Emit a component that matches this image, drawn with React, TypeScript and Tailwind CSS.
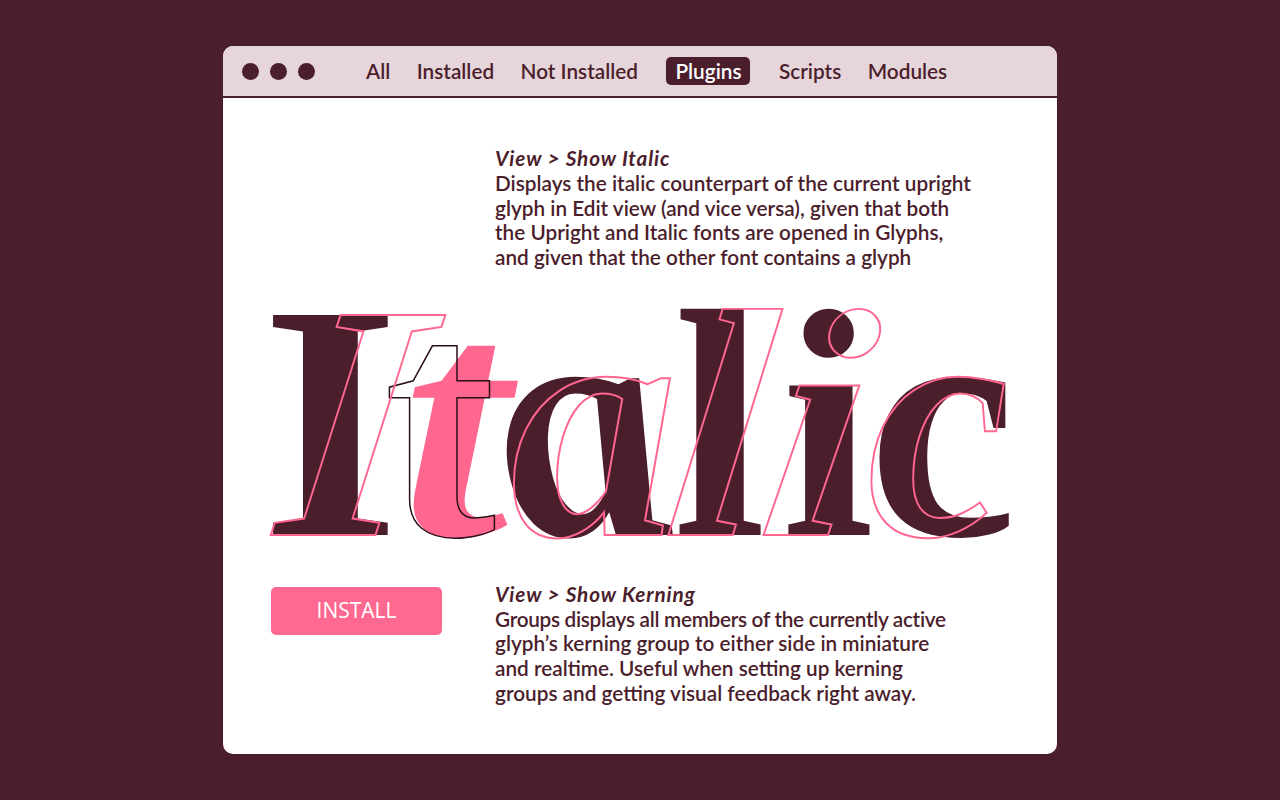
import type { ReactNode } from "react";

const tabs = ["All", "Installed", "Not Installed", "Plugins", "Scripts", "Modules"];

const Letter = ({ className, children }: { className: string; children: string }) => (
  <span className={"absolute top-[-16px] leading-none " + className}>{children}</span>
);

const uprightClass = "font-['Liberation_Serif',serif] font-bold text-[336px] ";
const italicClass = "font-['Liberation_Serif',serif] font-bold italic text-[336px] ";
const outlineClass = "text-transparent [-webkit-text-stroke:2px_#ff6690] ";

const Note = ({ title, lines }: { title: string; lines: ReactNode[] }) => (
  <div className="w-[520px] text-[20.75px] leading-[24.75px] font-semibold text-[#4b1e2c]">
    <p className="italic font-bold tracking-[0.85px]">{title}</p>
    {lines.map((line, i) => (
      <p key={i}>{line}</p>
    ))}
  </div>
);

export default function App() {
  return (
    <div className="flex h-[800px] w-[1280px] items-center justify-center bg-[#4b1e2c] font-['Lato',sans-serif]">
      <div className="flex h-[708px] w-[834px] flex-col overflow-hidden rounded-[10px] bg-white">
        <header className="flex h-[52px] items-center border-b-2 border-[#4b1e2c] bg-[#e6d5db] pl-[19px]">
          <div className="flex gap-[11px]">
            <span className="h-[17px] w-[17px] rounded-full bg-[#4b1e2c]" />
            <span className="h-[17px] w-[17px] rounded-full bg-[#4b1e2c]" />
            <span className="h-[17px] w-[17px] rounded-full bg-[#4b1e2c]" />
          </div>
          <nav className="ml-[51px] flex items-center gap-[26.5px] text-[20.75px] leading-[28px] font-semibold text-[#4b1e2c]">
            {tabs.map((tab) =>
              tab === "Plugins" ? (
                <span key={tab} className="mx-[2px] rounded-[5px] bg-[#4b1e2c] px-[9px] text-white">
                  {tab}
                </span>
              ) : (
                <span key={tab}>{tab}</span>
              ),
            )}
          </nav>
        </header>

        <section className="pl-[272px] pt-[48px]">
          <Note
            title="View >  Show Italic"
            lines={[
              "Displays the italic counterpart of the current upright",
              "glyph in Edit view (and vice versa), given that both",
              "the Upright and Italic fonts are opened in Glyphs,",
              "and given that the other font contains a glyph",
            ]}
          />
        </section>

        <div className="relative h-[312px] shrink-0">
          <Letter className={italicClass + "left-[185px] scale-x-[1.15] text-[#ff6690]"}>t</Letter>
          <Letter className={uprightClass + "left-[42px] scale-x-[1.06] text-[#4b1e2c]"}>I</Letter>
          <Letter className={uprightClass + "left-[161px] text-transparent [-webkit-text-stroke:1.5px_#2a0f18]"}>t</Letter>
          <Letter className={italicClass + "left-[268px] skew-x-[15deg] text-[#4b1e2c]"}>a</Letter>
          <Letter className={uprightClass + "left-[450px] origin-[50%_281px] scale-y-[0.97] text-[#4b1e2c]"}>l</Letter>
          <Letter className={uprightClass + "left-[558px] origin-[50%_281px] scale-y-[0.97] text-[#4b1e2c]"}>i</Letter>
          <Letter className={uprightClass + "left-[645px] text-[#4b1e2c]"}>c</Letter>
          <Letter className={italicClass + outlineClass + "left-[67px] skew-x-[-8deg]"}>I</Letter>
          <Letter className={italicClass + outlineClass + "left-[287px]"}>a</Letter>
          <Letter className={italicClass + outlineClass + "left-[438px] origin-[50%_281px] scale-y-[0.97] skew-x-[-7deg]"}>l</Letter>
          <Letter className={italicClass + outlineClass + "left-[532px] origin-[50%_281px] scale-y-[0.97] skew-x-[-9deg]"}>i</Letter>
          <Letter className={italicClass + outlineClass + "left-[640px] scale-x-[0.95]"}>c</Letter>
        </div>

        <section className="flex">
          <div className="ml-[48px] mt-[5px] flex h-[48px] w-[171px] items-center justify-center rounded-[5px] bg-[#ff6890] font-['Open_Sans',sans-serif] text-[21px] text-white">
            INSTALL
          </div>
          <div className="ml-[53px]">
            <Note
              title="View >  Show Kerning"
              lines={[
                <span className="tracking-[-0.3px]">Groups displays all members of the currently active</span>,
                "glyph’s kerning group to either side in miniature",
                "and realtime. Useful when setting up kerning",
                "groups and getting visual feedback right away.",
              ]}
            />
          </div>
        </section>
      </div>
    </div>
  );
}
